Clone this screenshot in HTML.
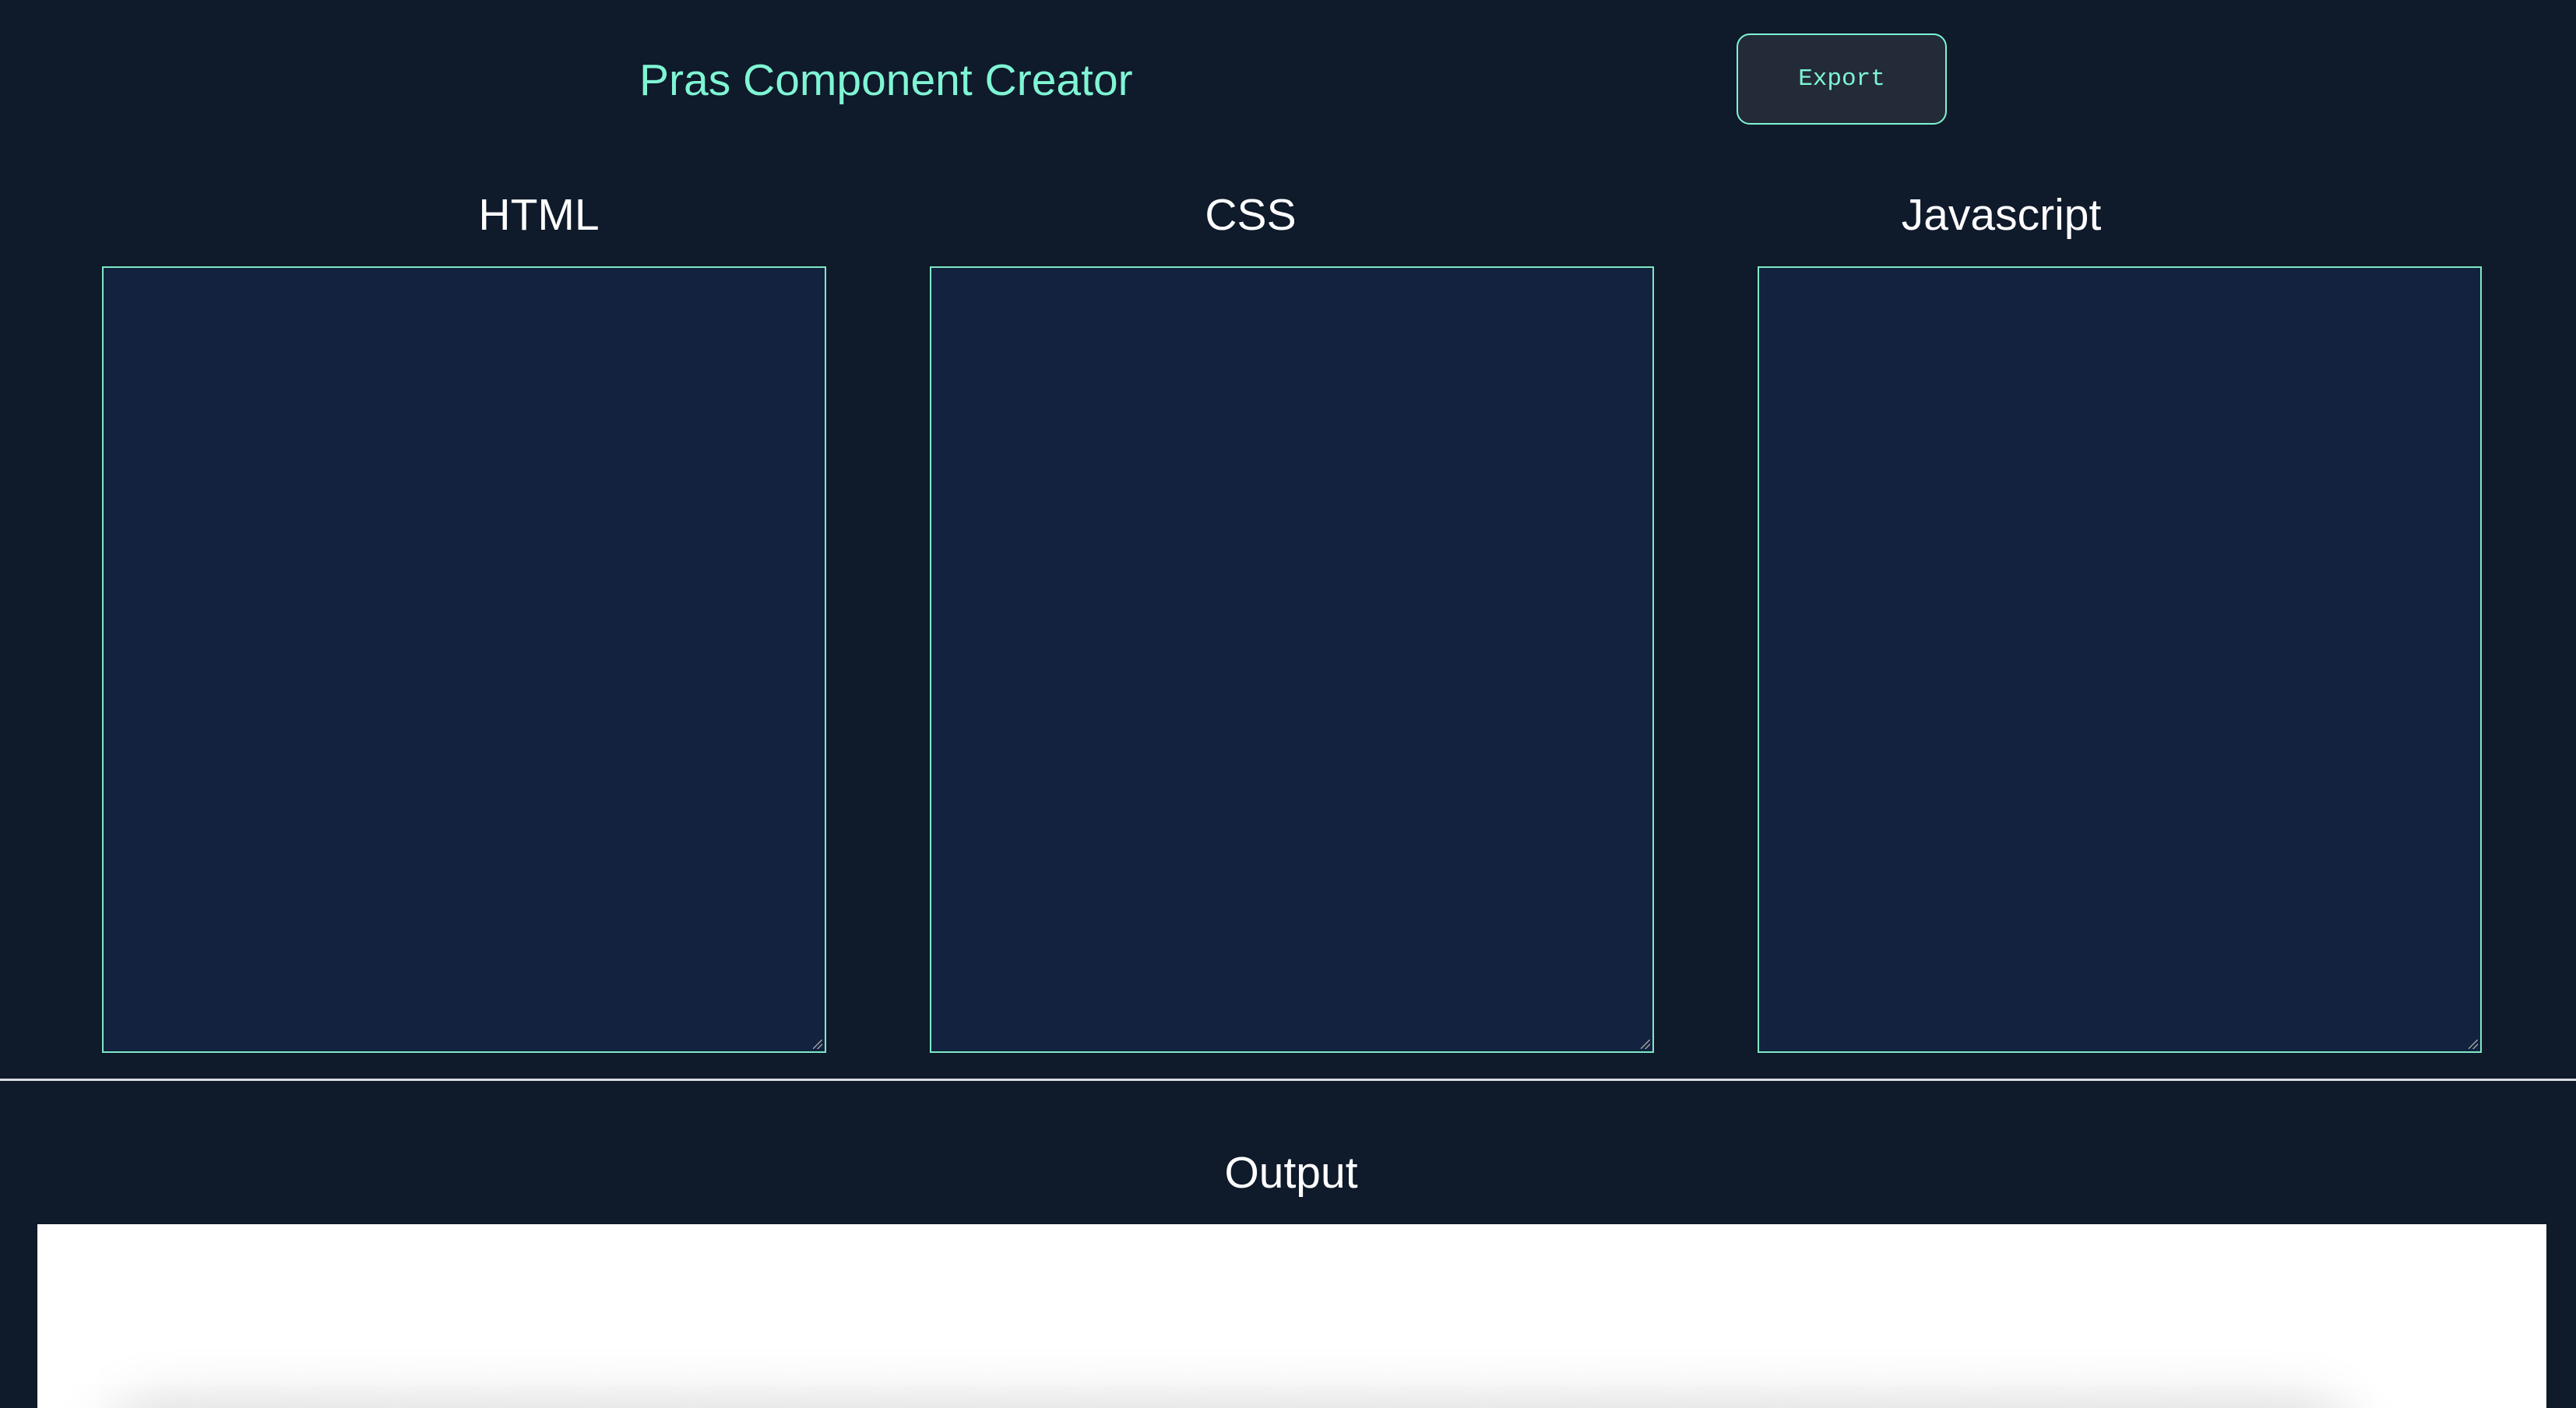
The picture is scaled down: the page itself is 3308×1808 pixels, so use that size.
<!DOCTYPE html>
<html><head><meta charset="utf-8"><style>
html,body{margin:0;padding:0;width:3308px;height:1808px;overflow:hidden;background:#0f1a2b;font-family:"Liberation Sans",sans-serif}
.abs{position:absolute}
.title{left:821px;top:70px;font-size:57px;color:#7ff5d4;white-space:nowrap}
.btn{left:2230px;top:43px;width:270px;height:117px;border:2px solid #7ff5d4;border-radius:17px;background:#232b38;color:#7ff5d4;font-family:"Liberation Mono",monospace;font-size:31px;display:flex;align-items:center;justify-content:center;box-sizing:border-box}
.h{font-size:57px;color:#fff;transform:translateX(-50%);top:243px;white-space:nowrap}
.ta{top:342px;width:930px;height:1010px;background:#13233f;border:2px solid #7fe8c4;box-sizing:border-box}
.ta:after{content:"";position:absolute;right:3px;bottom:3px;width:12px;height:12px;background:linear-gradient(135deg,transparent 45%,#aaa 46%,#aaa 52%,transparent 53%,transparent 70%,#aaa 71%,#aaa 77%,transparent 78%)}
.line{left:0;top:1385px;width:3308px;height:3px;background:#d8dde2}
.out{left:1658px;top:1473px;font-size:57px;color:#fff;transform:translateX(-50%)}
.white{left:48px;top:1572px;width:3222px;height:236px;background:#fff;overflow:hidden}
.sh{position:absolute;left:110px;top:262px;width:2840px;height:200px;border-radius:40px;background:#fff;box-shadow:0 0 80px 25px rgba(0,0,0,0.2)}
</style></head><body>
<div class="abs title">Pras Component Creator</div>
<div class="abs btn">Export</div>
<div class="abs h" style="left:692px">HTML</div>
<div class="abs h" style="left:1606px">CSS</div>
<div class="abs h" style="left:2570px">Javascript</div>
<div class="abs ta" style="left:131px"></div>
<div class="abs ta" style="left:1194px"></div>
<div class="abs ta" style="left:2257px"></div>
<div class="abs line"></div>
<div class="abs out">Output</div>
<div class="abs white"><div class="sh"></div></div>
</body></html>
